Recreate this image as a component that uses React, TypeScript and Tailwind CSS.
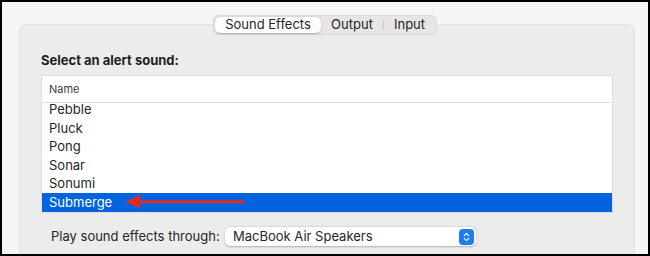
import { ChevronUp, ChevronDown } from "lucide-react";

const sounds = ["Pebble", "Pluck", "Pong", "Sonar", "Sonumi", "Submerge"];

const Tabs = () => {
  return (
    <div className="relative z-10 mx-auto flex h-[20px] w-[224px] items-stretch rounded-[6px] border border-[#dadada] bg-[#e6e6e6] p-px text-[13px] text-[#262626]">
      <div className="flex w-[106px] items-center justify-center rounded-[5px] bg-white shadow-[0_0.5px_1.5px_rgba(0,0,0,0.25)]">Sound Effects</div>
      <div className="flex w-[62px] items-center justify-center">Output</div>
      <div className="my-[4px] w-px bg-[#c8c8c8]"></div>
      <div className="flex flex-1 items-center justify-center">Input</div>
    </div>
  );
};

const Arrow = () => {
  return (
    <svg className="absolute left-[80px] top-0" width="124" height="19" viewBox="0 0 124 19">
      <path d="M14 7.3 L122 7.3 L122 10.3 L14 10.3 Z" fill="#e8281c" />
      <path d="M3 8.8 L19 1.8 L17 8.8 L19 15.8 Z" fill="#e8281c" />
    </svg>
  );
};

const App = () => {
  return (
    <div className="h-[256px] w-[650px] overflow-hidden border-2 border-black bg-[#f5f5f5] pt-[13px] font-['Inter','Liberation_Sans',sans-serif] text-[#262626]">
      <Tabs />
      <div className="-mt-[11px] ml-[17px] mr-[13px] h-[260px] rounded-[7px] border border-[#e2e2e2] bg-[#ececec] px-[21px] pt-[27px]">
        <h2 className="text-[13px] font-bold leading-[16px] text-[#1f1f1f]">Select an alert sound:</h2>
        <div className="mt-[7px] border border-[#dedede] bg-white">
          <div className="relative z-10 flex h-[27px] items-center border-b border-[#dcdcdc] bg-white pl-[7px] text-[11px] text-[#3a3a3a]">Name</div>
          <div className="-mt-[2.5px]">
            {sounds.map((s) => {
              const selected = s === "Submerge";
              return (
                <div
                  key={s}
                  className={
                    selected
                      ? "relative flex h-[19px] items-center bg-[#0064e1] pl-[7px] text-[13px] text-white"
                      : "flex h-[18.5px] items-center pl-[7px] text-[13px]"
                  }
                >
                  {s}
                  {selected && <Arrow />}
                </div>
              );
            })}
          </div>
        </div>
        <div className="mt-[14px] flex items-center pl-[10px] text-[13px]">
          <span className="w-[174px]">Play sound effects through:</span>
          <div className="flex h-[19px] w-[251px] items-center justify-between rounded-[5px] bg-white pl-[8px] pr-[2px] shadow-[0_0.5px_2px_rgba(0,0,0,0.25)]">
            <span>MacBook Air Speakers</span>
            <div className="flex h-[16px] w-[15px] flex-col items-center justify-center rounded-[4px] bg-[#1c7cf4] text-white">
              <ChevronUp size={9} strokeWidth={3} className="-mb-[2px]" />
              <ChevronDown size={9} strokeWidth={3} className="-mt-[2px]" />
            </div>
          </div>
        </div>
      </div>
    </div>
  );
};

export default App;
